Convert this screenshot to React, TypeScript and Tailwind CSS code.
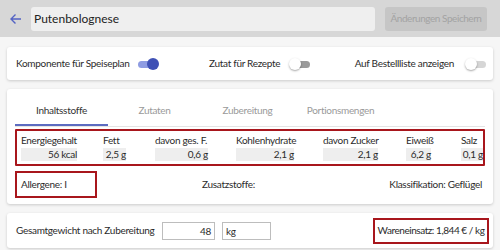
import React from 'react';

const nutrients = [
  { label: 'Energiegehalt', value: '56 kcal', box: 'w-[56px]' },
  { label: 'Fett', value: '2,5 g', box: 'w-[23px]' },
  { label: 'davon ges. F.', value: '0,6 g', box: 'w-[53px]' },
  { label: 'Kohlenhydrate', value: '2,1 g', box: 'w-[58px]' },
  { label: 'davon Zucker', value: '2,1 g', box: 'w-[55px]' },
  { label: 'Eiweiß', value: '6,2 g', box: 'w-[25px]' },
  { label: 'Salz', value: '0,1 g', box: 'w-[22px]' },
];

function Toggle({ on, muted }: { on?: boolean; muted?: boolean }) {
  return (
    <div className="relative h-[12px] w-[22px]">
      <div
        className={
          'absolute left-[1px] right-[1px] top-[3px] h-[7px] rounded-full ' +
          (on ? 'bg-[#8e9ce2]' : muted ? 'bg-[#d6d6d6]' : 'bg-[#9a9a9a]')
        }
      />
      <div
        className={
          'absolute top-0 h-[12px] w-[12px] rounded-full ' +
          (on ? 'right-0 bg-[#3f51b5]' : 'left-0 bg-white shadow-[0_1px_2px_rgba(0,0,0,0.35)]')
        }
      />
    </div>
  );
}

export default function App() {
  return (
    <div
      className="h-[250px] w-[500px] overflow-hidden whitespace-nowrap bg-[#f6f6f6] text-[10px] tracking-[-0.3px] text-[#2b2b2b]"
      style={{ fontFamily: 'Lato, "Liberation Sans", sans-serif' }}
    >
      <div className="flex h-[37px] items-center bg-[#d7d7d7] pl-[9px] pr-[13px]">
        <svg width="13" height="12" viewBox="0 0 13 12" className="mr-[9px]">
          <path d="M12 6H2M6.5 1.5L2 6l4.5 4.5" fill="none" stroke="#5463c4" strokeWidth="1.4" />
        </svg>
        <div className="flex h-[24px] flex-1 items-center rounded-[3px] bg-[#efefef] pl-[3px] text-[12px] tracking-normal text-[#222]">
          Putenbolognese
        </div>
        <div className="ml-[10px] flex h-[24px] w-[102px] items-center justify-center rounded-[3px] bg-[#c6c6c6] text-[10px] tracking-[-0.45px] text-[#a3a3a3]">
          Änderungen Speichern
        </div>
      </div>

      <div className="flex flex-col gap-[9px] px-[7px] pt-[10px]">
        <div className="flex h-[33px] items-center rounded-[3px] bg-white pl-[9px] pr-[6px] shadow-[0_1px_3px_rgba(0,0,0,0.18)]">
          <span className="w-[121px]">Komponente für Speiseplan</span>
          <Toggle on />
          <span className="ml-[50px]">Zutat für Rezepte</span>
          <div className="ml-[9px]">
            <Toggle />
          </div>
          <span className="ml-auto">Auf Bestellliste anzeigen</span>
          <div className="ml-[11px]">
            <Toggle muted />
          </div>
        </div>

        <div className="rounded-[3px] bg-white px-[8px] pb-[6px] pt-[14px] shadow-[0_1px_3px_rgba(0,0,0,0.18)]">
          <div className="flex border-b border-[#e4e4e4]">
            <div className="w-[93px] border-b-2 border-[#5c6bc0] pb-[6px] text-center text-[#333]">Inhaltsstoffe</div>
            <div className="w-[93px] pb-[6px] text-center text-[#9a9a9a]">Zutaten</div>
            <div className="w-[93px] pb-[6px] text-center text-[#9a9a9a]">Zubereitung</div>
            <div className="w-[93px] pb-[6px] text-center text-[#9a9a9a]">Portionsmengen</div>
          </div>

          <div className="mt-[2px] grid h-[37px] grid-cols-[82px_52px_81px_87px_83px_55px_auto] content-center rounded-[1px] border-2 border-[#a8161c] pl-[4px]">
            {nutrients.map((n) => (
              <div key={n.label} className="flex flex-col">
                <span className="leading-[13px]">{n.label}</span>
                <span className={'mt-[1px] h-[13px] bg-[#eeeeee] text-right leading-[13px] ' + n.box}>{n.value}</span>
              </div>
            ))}
          </div>

          <div className="mt-[5px] flex h-[27px] items-center">
            <div className="flex h-[27px] w-[82px] items-center border-2 border-[#a8161c] pl-[4px]">Allergene: I</div>
            <span className="ml-[105px]">Zusatzstoffe:</span>
            <span className="ml-auto pr-[3px]">Klassifikation: Geflügel</span>
          </div>
        </div>

        <div className="flex h-[35px] items-center rounded-[3px] bg-white pl-[9px] pr-[4px] shadow-[0_1px_3px_rgba(0,0,0,0.18)]">
          <span className="w-[146px]">Gesamtgewicht nach Zubereitung</span>
          <div className="h-[18px] w-[53px] border border-[#bdbdbd] pr-[3px] text-right leading-[16px]">48</div>
          <div className="ml-[7px] h-[18px] w-[49px] border border-[#bdbdbd] pl-[3px] leading-[16px]">kg</div>
          <div className="ml-auto flex h-[26px] w-[116px] items-center justify-center border-2 border-[#a8161c] tracking-[-0.45px]">Wareneinsatz: 1,844 € / kg</div>
        </div>
      </div>
    </div>
  );
}
